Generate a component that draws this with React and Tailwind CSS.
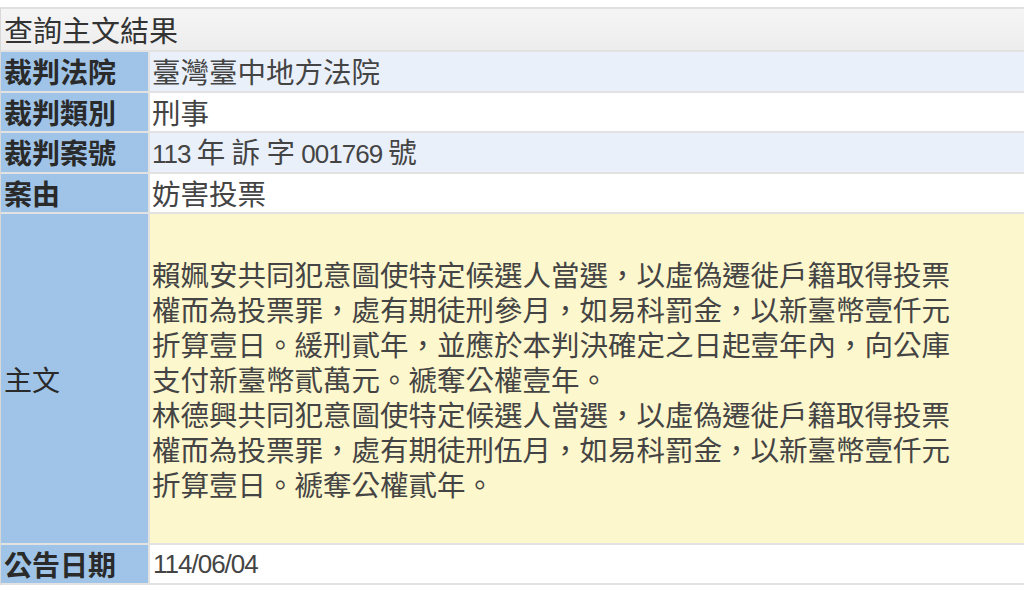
const mainLines = [
  '賴姵安共同犯意圖使特定候選人當選，以虛偽遷徙戶籍取得投票',
  '權而為投票罪，處有期徒刑參月，如易科罰金，以新臺幣壹仟元',
  '折算壹日。緩刑貳年，並應於本判決確定之日起壹年內，向公庫',
  '支付新臺幣貳萬元。褫奪公權壹年。',
  '林德興共同犯意圖使特定候選人當選，以虛偽遷徙戶籍取得投票',
  '權而為投票罪，處有期徒刑伍月，如易科罰金，以新臺幣壹仟元',
  '折算壹日。褫奪公權貳年。',
]

const font = { fontFamily: '"Noto Sans CJK TC", sans-serif' }

function Num({ children }) {
  return <span className="font-['Liberation_Sans',sans-serif] text-[26px] tracking-[-1px]">{children}</span>
}

const rows = [
  { label: '裁判法院', value: '臺灣臺中地方法院', bg: 'bg-[#e9f0fa]' },
  { label: '裁判類別', value: '刑事', bg: 'bg-white' },
  {
    label: '裁判案號',
    value: (
      <>
        <Num>113 </Num>年 訴 字 <Num>001769 </Num>號
      </>
    ),
    bg: 'bg-[#e9f0fa]',
  },
  { label: '案由', value: '妨害投票', bg: 'bg-white' },
]

function Label({ children, className = '' }) {
  return (
    <div className={`bg-[#9fc4e8] flex items-center pl-[3px] text-[28px] font-bold text-[#2a2a2a] leading-none ${className}`}>
      {children}
    </div>
  )
}

export default function App() {
  return (
    <div lang="zh-TW" className="w-[1024px] h-[591px] bg-white pt-[7px] overflow-hidden" style={font}>
      <div className="grid grid-cols-[147px_1fr] gap-[2px] bg-[#e2e2e2] border-l border-[#d8d8d8] pb-[2px]">
        <div className="col-span-2 h-[43px] bg-gradient-to-b from-[#f5f5f5] to-[#ededed] border-t-2 border-[#e0e0e0] flex items-center pl-[3px] text-[29px] text-[#333] leading-none">
          查詢主文結果
        </div>

        {rows.map((r) => (
          <div key={r.label} className="contents">
            <Label className="h-[38.5px]">{r.label}</Label>
            <div className={`${r.bg} flex items-center pl-[2px] text-[28.5px] text-[#444] leading-none whitespace-pre`}>
              <div>{r.value}</div>
            </div>
          </div>
        ))}

        <Label className="h-[329px] font-normal">主文</Label>
        <div className="bg-[#fdf7cd] flex flex-col justify-center pl-[2px] text-[28.5px] text-[#444] leading-[35px]">
          {mainLines.map((line) => (
            <div key={line} className="whitespace-nowrap">{line}</div>
          ))}
        </div>

        <Label className="h-[38px]">公告日期</Label>
        <div className="bg-white flex items-center pl-[3px] text-[28.5px] text-[#444] leading-none">
          <Num>114/06/04</Num>
        </div>
      </div>
    </div>
  )
}
